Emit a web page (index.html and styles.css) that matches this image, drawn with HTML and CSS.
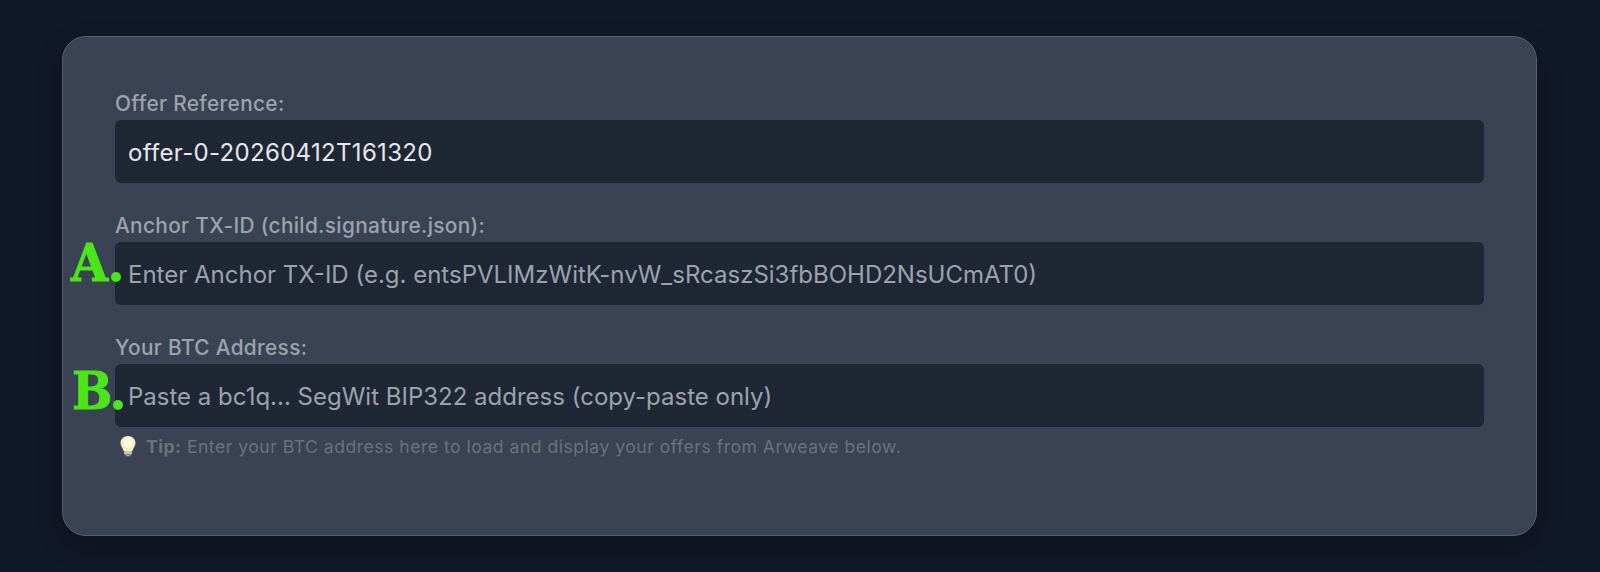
FILE: index.html
```html
<!DOCTYPE html>
<html lang="en">
<head>
    <meta charset="UTF-8">
    <title>Offer</title>
    <link rel="stylesheet" href="styles.css">
</head>
<body>
<div class="card">
    <div class="field">
        <label class="field-label">Offer Reference:</label>
        <div class="field-input value">offer-0-20260412T161320</div>
    </div>
    <div class="field">
        <label class="field-label">Anchor TX-ID (child.signature.json):</label>
        <div class="field-row">
            <div class="field-input placeholder">Enter Anchor TX-ID (e.g. entsPVLIMzWitK-nvW_sRcaszSi3fbBOHD2NsUCmAT0)</div>
            <span class="marker marker-a">A</span>
            <span class="marker-dot dot-a"></span>
        </div>
    </div>
    <div class="field">
        <label class="field-label">Your BTC Address:</label>
        <div class="field-row">
            <div class="field-input placeholder">Paste a bc1q... SegWit BIP322 address (copy-paste only)</div>
            <span class="marker marker-b">B</span>
            <span class="marker-dot dot-b"></span>
        </div>
        <div class="tip">
            <svg class="tip-icon" viewBox="0 0 16 21" width="16" height="22">
                <path d="M8 0.5C3.6 0.5 0.5 3.6 0.5 7.4c0 3.4 2.6 5 3 8.1h9c0.4-3.1 3-4.7 3-8.1C15.500 3.6 12.400 0.500 8 0.500z" fill="#f6eeb4"/>
                <path d="M8 1.500C10.500 1.500 13 4 13 7c0 2-1.500 3.500-2.500 5.500H6C5 10.500 3.500 9 3.500 7 3.500 4 5.500 1.500 8 1.500z" fill="#fffbe0"/>
                <rect x="4" y="15.500" width="8" height="3.500" rx="1" fill="#c4c5be"/>
                <rect x="5.500" y="19" width="5" height="1.800" rx="0.900" fill="#9a9da3"/>
            </svg>
            <span><b>Tip:</b> Enter your BTC address here to load and display your offers from Arweave below.</span>
        </div>
    </div>
</div>
</body>
</html>
```

FILE: styles.css
```css
* {
    box-sizing: border-box;
}
body {
    margin: 0;
    height: 572px;
    overflow: hidden;
    background-color: #111827;
    font-family: Inter, "Noto Sans", sans-serif;
    padding: 36px 63px 0 62px;
}
.card {
    height: 500px;
    background-color: #3a4353;
    border: 1px solid #566072;
    border-radius: 24px;
    box-shadow: 0 10px 25px rgba(0, 0, 0, 0.25);
    padding: 52px;
    display: flex;
    flex-direction: column;
    gap: 28px;
}
.field {
    display: flex;
    flex-direction: column;
}
.field-label {
    font-size: 20.800px;
    font-weight: 450;
    letter-spacing: 0.350px;
    line-height: 30px;
    height: 31px;
    color: #9ca3af;
}
.field-row {
    position: relative;
}
.field-input {
    height: 63px;
    padding: 1px 13px 0;
    display: flex;
    align-items: center;
    background-color: #1f2735;
    border-radius: 6px;
    color: #e5e7eb;
    font-size: 24px;
}
.value {
    letter-spacing: 0.320px;
}
.placeholder {
    color: #9ca3af;
}
.marker {
    position: absolute;
    left: -44px;
    top: -14px;
    font-family: "DejaVu Serif", serif;
    font-weight: bold;
    font-size: 52px;
    line-height: 70px;
    color: #4ae61a;
    -webkit-text-stroke: 1px #4ae61a;
    transform: scaleX(0.920);
    transform-origin: left center;
}
.marker-b {
    left: -43px;
    top: -8px;
}
.marker-dot {
    position: absolute;
    width: 10px;
    height: 10px;
    border-radius: 50%;
    background-color: #4ae61a;
}
.dot-a {
    left: -4px;
    top: 30px;
}
.dot-b {
    left: -2px;
    top: 36px;
}
.tip {
    display: flex;
    align-items: center;
    gap: 10px;
    margin-top: 7px;
    padding-left: 5px;
    font-size: 17.600px;
    letter-spacing: 0.490px;
    line-height: 26px;
    color: #6b7280;
}
.tip-icon {
    margin-top: -2px;
}
.tip b {
    font-weight: 700;
}
```
